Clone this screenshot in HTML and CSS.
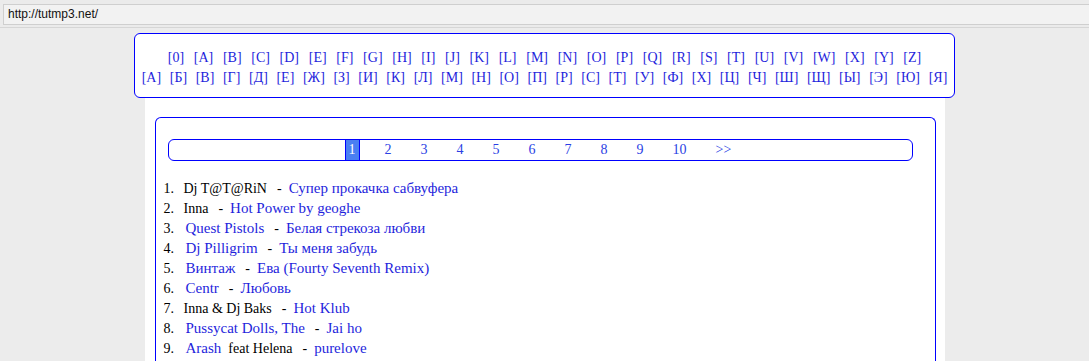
FILE: index.html
```html
<!DOCTYPE html>
<html lang="ru">
<head>
    <meta charset="UTF-8">
    <title>tutmp3.net</title>
    <link rel="stylesheet" href="styles.css">
</head>
<body>
    <div class="addr-bar">
        <div class="addr-box">http://tutmp3.net/</div>
    </div>

    <div class="letters">
        <div class="letters-row">
            <a href="#">[0]</a><a href="#">[A]</a><a href="#">[B]</a><a href="#">[C]</a><a href="#">[D]</a><a href="#">[E]</a><a href="#">[F]</a><a href="#">[G]</a><a href="#">[H]</a><a href="#">[I]</a><a href="#">[J]</a><a href="#">[K]</a><a href="#">[L]</a><a href="#">[M]</a><a href="#">[N]</a><a href="#">[O]</a><a href="#">[P]</a><a href="#">[Q]</a><a href="#">[R]</a><a href="#">[S]</a><a href="#">[T]</a><a href="#">[U]</a><a href="#">[V]</a><a href="#">[W]</a><a href="#">[X]</a><a href="#">[Y]</a><a href="#">[Z]</a>
        </div>
        <div class="letters-row cyr">
            <a href="#">[А]</a><a href="#">[Б]</a><a href="#">[В]</a><a href="#">[Г]</a><a href="#">[Д]</a><a href="#">[Е]</a><a href="#">[Ж]</a><a href="#">[З]</a><a href="#">[И]</a><a href="#">[К]</a><a href="#">[Л]</a><a href="#">[М]</a><a href="#">[Н]</a><a href="#">[О]</a><a href="#">[П]</a><a href="#">[Р]</a><a href="#">[С]</a><a href="#">[Т]</a><a href="#">[У]</a><a href="#">[Ф]</a><a href="#">[Х]</a><a href="#">[Ц]</a><a href="#">[Ч]</a><a href="#">[Ш]</a><a href="#">[Щ]</a><a href="#">[Ы]</a><a href="#">[Э]</a><a href="#">[Ю]</a><a href="#">[Я]</a>
        </div>
    </div>

    <div class="panel">
        <div class="inner">
            <div class="pages">
                <span class="current">1</span>
                <a href="#">2</a>
                <a href="#">3</a>
                <a href="#">4</a>
                <a href="#">5</a>
                <a href="#">6</a>
                <a href="#">7</a>
                <a href="#">8</a>
                <a href="#">9</a>
                <a href="#">10</a>
                <a href="#">&gt;&gt;</a>
            </div>

            <ol class="tracks">
                <li><span class="num">1.</span><span class="artist">Dj T@T@RiN</span><span class="sep">-</span><a class="title" href="#">Супер прокачка сабвуфера</a></li>
                <li><span class="num">2.</span><span class="artist">Inna</span><span class="sep">-</span><a class="title" href="#">Hot Power by geoghe</a></li>
                <li><span class="num">3.</span><a class="artist-link" href="#">Quest Pistols</a><span class="sep">-</span><a class="title" href="#">Белая стрекоза любви</a></li>
                <li><span class="num">4.</span><a class="artist-link" href="#">Dj Pilligrim</a><span class="sep">-</span><a class="title" href="#">Ты меня забудь</a></li>
                <li><span class="num">5.</span><a class="artist-link" href="#">Винтаж</a><span class="sep">-</span><a class="title" href="#">Ева (Fourty Seventh Remix)</a></li>
                <li><span class="num">6.</span><a class="artist-link" href="#">Centr</a><span class="sep">-</span><a class="title" href="#">Любовь</a></li>
                <li><span class="num">7.</span><span class="artist">Inna &amp; Dj Baks</span><span class="sep">-</span><a class="title" href="#">Hot Klub</a></li>
                <li><span class="num">8.</span><a class="artist-link" href="#">Pussycat Dolls, The</a><span class="sep">-</span><a class="title" href="#">Jai ho</a></li>
                <li><span class="num">9.</span><a class="artist-link" href="#">Arash</a><span class="artist feat">feat Helena</span><span class="sep">-</span><a class="title" href="#">purelove</a></li>
            </ol>
        </div>
    </div>
</body>
</html>
```

FILE: styles.css
```css
html, body {
    height: 361px;
    overflow: hidden;
}

body {
    margin: 0;
    padding: 0;
    background-color: #ececec;
    font-family: "Liberation Serif", "Times New Roman", serif;
    font-size: 14px;
    color: #000;
}

a {
    text-decoration: none;
    color: #1f1fdc;
}

.addr-bar {
    height: 28px;
    border-bottom: 1px solid #d6d6d6;
    background: #ebebeb;
    padding: 4px 0 0 3px;
    box-sizing: border-box;
}

.addr-box {
    height: 21px;
    box-sizing: border-box;
    border: 1px solid #cfcfcf;
    border-right: none;
    background: #f2f2f2;
    font-family: "Liberation Sans", Arial, sans-serif;
    font-size: 12px;
    line-height: 19px;
    padding-left: 4px;
    color: #111;
}

.letters {
    width: 821px;
    box-sizing: border-box;
    margin: 5px auto 0;
    padding: 14px 0 9px;
    border: 1px solid #0000ff;
    border-radius: 6px;
    background: #fff;
    position: relative;
    z-index: 1;
}

.letters-row {
    display: flex;
    justify-content: center;
    gap: 9.7px;
    line-height: 20px;
    white-space: nowrap;
}

.letters-row.cyr {
    gap: 8.6px;
}

.panel {
    width: 800px;
    margin: -8px auto 0;
    padding-top: 27px;
    background: #fff;
    border-radius: 8px 8px 0 0;
    height: 300px;
}

.inner {
    margin: 0 9px 0 10px;
    border: 1px solid #0000ff;
    border-bottom: none;
    border-radius: 6px 6px 0 0;
    padding-top: 21px;
    height: 300px;
}

.pages {
    width: 745px;
    height: 22px;
    box-sizing: border-box;
    margin-left: 12px;
    border: 1px solid #0000ff;
    border-radius: 6px;
    display: flex;
    justify-content: center;
    align-items: stretch;
    font-size: 14px;
}

.pages a,
.pages .current {
    padding: 0 4px;
    margin: 0 10.5px;
    line-height: 20px;
    color: #2b3fe4;
}

.pages .current {
    background: #4a7ff2;
    color: #fff;
    border-left: 1px solid #0000ff;
    border-right: 1px solid #0000ff;
    padding: 0 3px;
}

.tracks {
    list-style: none;
    margin: 17px 0 0;
    padding: 0 0 0 8px;
}

.tracks li {
    height: 20px;
    line-height: 20px;
    white-space: nowrap;
}

.num {
    display: inline-block;
    width: 20px;
}

.artist-link {
    font-size: 15px;
    margin-left: 2px;
}

.feat {
    margin-left: 7px;
}

.sep {
    padding: 0 7px 0 10px;
}

.title {
    font-size: 15px;
}
```
